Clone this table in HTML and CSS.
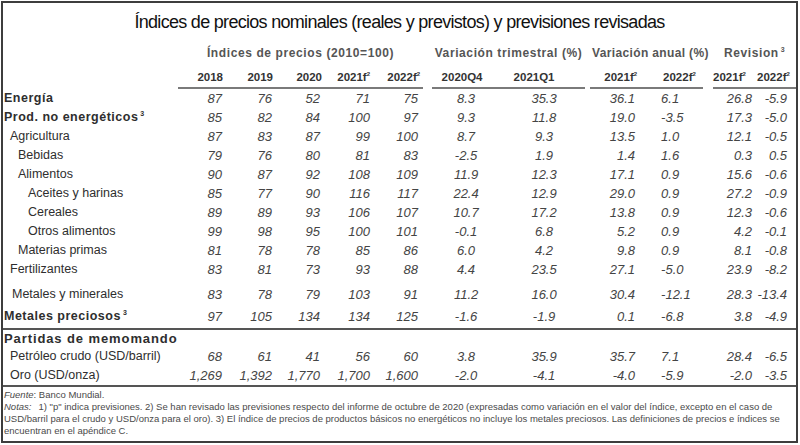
FILE: index.html
```html
<!DOCTYPE html>
<html lang="es">
<head>
<meta charset="utf-8">
<title>Índices de precios</title>
<link rel="stylesheet" href="styles.css">
</head>
<body>
<div class="sheet">
  <h1 class="title">Índices de precios nominales (reales y previstos) y previsiones revisadas</h1>
  <table class="grid">
    <colgroup>
      <col class="c-label"><col class="c-y18"><col class="c-y19"><col class="c-y20"><col class="c-y21"><col class="c-y22"><col class="c-gap1"><col class="c-q4"><col class="c-q1"><col class="c-gap2"><col class="c-a21"><col class="c-a22"><col class="c-gap3"><col class="c-r21"><col class="c-r22">
    </colgroup>
    <thead>
      <tr class="group-row">
        <th></th>
        <th colspan="5">Índices de precios (2010=100)</th>
        <th></th>
        <th colspan="2">Variación trimestral (%)</th>
        <th></th>
        <th colspan="2" class="g-anual">Variación anual (%)</th>
        <th></th>
        <th colspan="2">Revision<sup>3</sup></th>
      </tr>
      <tr class="year-row">
        <th class="nb"></th>
        <th class="u">2018</th>
        <th class="u">2019</th>
        <th class="u">2020</th>
        <th class="u">2021f<sup>2</sup></th>
        <th class="u">2022f<sup>2</sup></th>
        <th class="nb"></th>
        <th class="u">2020Q4</th>
        <th class="u">2021Q1</th>
        <th class="nb"></th>
        <th class="u">2021f<sup>2</sup></th>
        <th class="u">2022f<sup>2</sup></th>
        <th class="nb"></th>
        <th class="u">2021f<sup>2</sup></th>
        <th class="u">2022f<sup>2</sup></th>
      </tr>
    </thead>
    <tbody>
      <tr class="row"><td class="lbl b l0">Energía</td><td>87</td><td>76</td><td>52</td><td>71</td><td>75</td><td></td><td>8.3</td><td>35.3</td><td></td><td>36.1</td><td>6.1</td><td></td><td>26.8</td><td>-5.9</td></tr>
      <tr class="row"><td class="lbl b l0">Prod. no energéticos<sup>3</sup></td><td>85</td><td>82</td><td>84</td><td>100</td><td>97</td><td></td><td>9.3</td><td>11.8</td><td></td><td>19.0</td><td>-3.5</td><td></td><td>17.3</td><td>-5.0</td></tr>
      <tr class="row"><td class="lbl l1">Agricultura</td><td>87</td><td>83</td><td>87</td><td>99</td><td>100</td><td></td><td>8.7</td><td>9.3</td><td></td><td>13.5</td><td>1.0</td><td></td><td>12.1</td><td>-0.5</td></tr>
      <tr class="row"><td class="lbl l2">Bebidas</td><td>79</td><td>76</td><td>80</td><td>81</td><td>83</td><td></td><td>-2.5</td><td>1.9</td><td></td><td>1.4</td><td>1.6</td><td></td><td>0.3</td><td>0.5</td></tr>
      <tr class="row"><td class="lbl l2">Alimentos</td><td>90</td><td>87</td><td>92</td><td>108</td><td>109</td><td></td><td>11.9</td><td>12.3</td><td></td><td>17.1</td><td>0.9</td><td></td><td>15.6</td><td>-0.6</td></tr>
      <tr class="row"><td class="lbl l3">Aceites y harinas</td><td>85</td><td>77</td><td>90</td><td>116</td><td>117</td><td></td><td>22.4</td><td>12.9</td><td></td><td>29.0</td><td>0.9</td><td></td><td>27.2</td><td>-0.9</td></tr>
      <tr class="row"><td class="lbl l3">Cereales</td><td>89</td><td>89</td><td>93</td><td>106</td><td>107</td><td></td><td>10.7</td><td>17.2</td><td></td><td>13.8</td><td>0.9</td><td></td><td>12.3</td><td>-0.6</td></tr>
      <tr class="row"><td class="lbl l3">Otros alimentos</td><td>99</td><td>98</td><td>95</td><td>100</td><td>101</td><td></td><td>-0.1</td><td>6.8</td><td></td><td>5.2</td><td>0.9</td><td></td><td>4.2</td><td>-0.1</td></tr>
      <tr class="row"><td class="lbl l2">Materias primas</td><td>81</td><td>78</td><td>78</td><td>85</td><td>86</td><td></td><td>6.0</td><td>4.2</td><td></td><td>9.8</td><td>0.9</td><td></td><td>8.1</td><td>-0.8</td></tr>
      <tr class="row"><td class="lbl l1">Fertilizantes</td><td>83</td><td>81</td><td>73</td><td>93</td><td>88</td><td></td><td>4.4</td><td>23.5</td><td></td><td>27.1</td><td>-5.0</td><td></td><td>23.9</td><td>-8.2</td></tr>
      <tr class="row row-metals"><td class="lbl l1m">Metales y minerales</td><td>83</td><td>78</td><td>79</td><td>103</td><td>91</td><td></td><td>11.2</td><td>16.0</td><td></td><td>30.4</td><td>-12.1</td><td></td><td>28.3</td><td>-13.4</td></tr>
      <tr class="row row-prec"><td class="lbl b l0">Metales preciosos<sup>3</sup></td><td>97</td><td>105</td><td>134</td><td>134</td><td>125</td><td></td><td>-1.6</td><td>-1.9</td><td></td><td>0.1</td><td>-6.8</td><td></td><td>3.8</td><td>-4.9</td></tr>
      <tr class="row-memo"><td colspan="15" class="lbl b l0 memo">Partidas de memomando</td></tr>
      <tr class="row"><td class="lbl l1">Petróleo crudo (USD/barril)</td><td>68</td><td>61</td><td>41</td><td>56</td><td>60</td><td></td><td>3.8</td><td>35.9</td><td></td><td>35.7</td><td>7.1</td><td></td><td>28.4</td><td>-6.5</td></tr>
      <tr class="row"><td class="lbl l1">Oro (USD/onza)</td><td>1,269</td><td>1,392</td><td>1,770</td><td>1,700</td><td>1,600</td><td></td><td>-2.0</td><td>-4.1</td><td></td><td>-4.0</td><td>-5.9</td><td></td><td>-2.0</td><td>-3.5</td></tr>
    </tbody>
  </table>
  <div class="notes">
    <p class="note-line"><em>Fuente</em>: Banco Mundial.</p>
    <p class="note-line"><em class="notas">Notas:</em>1) "p" indica previsiones. 2) Se han revisado las previsiones respecto del informe de octubre de 2020 (expresadas como variación en el valor del índice, excepto en el caso de</p>
    <p class="note-line">USD/barril para el crudo y USD/onza para el oro). 3) El índice de precios de productos básicos no energéticos no incluye los metales preciosos. Las definiciones de precios e índices se</p>
    <p class="note-line">encuentran en el apéndice C.</p>
  </div>
</div>
</body>
</html>
```

FILE: styles.css
```css
* { box-sizing: border-box; }
html, body { margin: 0; padding: 0; background: #ffffff; }
body { font-family: "Liberation Sans", Arial, sans-serif; color: #333333; }

.sheet {
  margin: 1px;
  width: 797px;
  height: 442px;
  border: 2px solid #3d3d3d;
  display: flex;
  flex-direction: column;
  overflow: hidden;
}

.title {
  margin: 0;
  padding-top: 8px;
  height: 30px;
  flex: none;
  font-family: "Liberation Sans", Arial, sans-serif;
  font-weight: normal;
  font-size: 18px;
  line-height: 22px;
  letter-spacing: -0.7px;
  text-align: center;
  color: #111111;
  white-space: nowrap;
}

.grid {
  flex: none;
  width: 793px;
  table-layout: fixed;
  border-collapse: separate;
  border-spacing: 0;
}
.c-label { width: 175px; }
.c-y18 { width: 47px; }
.c-y19 { width: 50px; }
.c-y20 { width: 48px; }
.c-y21 { width: 50px; }
.c-y22 { width: 50px; }
.c-gap1 { width: 9px; }
.c-q4 { width: 68px; }
.c-q1 { width: 85px; }
.c-gap2 { width: 5px; }
.c-a21 { width: 55px; }
.c-a22 { width: 58px; }
.c-gap3 { width: 10px; }
.c-r21 { width: 44px; }
.c-r22 { width: 39px; }

.grid th, .grid td { padding: 0; white-space: nowrap; }

sup { font-size: 7px; line-height: 0; vertical-align: 5px; margin-left: 2px; }
.year-row sup { font-size: 6px; margin-left: 0; }

/* group header row */
.group-row th {
  height: 31px;
  vertical-align: bottom;
  padding-bottom: 4px;
  font-size: 12px;
  line-height: 14px;
  font-weight: bold;
  letter-spacing: 0.6px;
  color: #555555;
  text-align: center;
}
.group-row .g-anual { padding-left: 2px; letter-spacing: 0.35px; }

/* year header row */
.year-row th {
  height: 25px;
  vertical-align: bottom;
  padding-bottom: 3px;
  font-size: 11.5px;
  line-height: 14px;
  font-weight: bold;
  color: #333333;
  text-align: right;
}
.year-row th.u { border-bottom: 2px solid #7a7a7a; }
.year-row th:nth-child(2) { padding-right: 2px; }
.year-row th:nth-child(3) { padding-right: 2px; }
.year-row th:nth-child(4) { padding-right: 1px; }
.year-row th:nth-child(5) { padding-right: 3px; }
.year-row th:nth-child(6) { padding-right: 3px; }
.year-row th:nth-child(8) { text-align: center; padding-right: 8px; }
.year-row th:nth-child(9) { text-align: center; padding-right: 17px; }
.year-row th:nth-child(11) { padding-right: 8px; }
.year-row th:nth-child(12) { text-align: left; padding-left: 18px; }
.year-row th:nth-child(14) { padding-right: 13px; }
.year-row th:nth-child(15) { padding-right: 8px; }

/* data rows */
.row td {
  height: 19px;
  line-height: 19px;
  font-size: 13px;
  font-style: italic;
  color: #444444;
  text-align: right;
  vertical-align: middle;
}
.row td:nth-child(2),
.row td:nth-child(3),
.row td:nth-child(4),
.row td:nth-child(5) { padding-right: 3px; }
.row td:nth-child(6) { padding-right: 5px; }
.row td:nth-child(8) { text-align: center; }
.row td:nth-child(9) { text-align: center; padding-left: 3px; }
.row td:nth-child(11) { padding-right: 10px; }
.row td:nth-child(12) { text-align: left; padding-left: 16px; }
.row td:nth-child(14) { padding-right: 5px; }
.row td:nth-child(15) { padding-right: 9px; }

.row-metals td { height: 25px; vertical-align: bottom; }
.row-prec td { height: 24px; }

.grid td.lbl {
  text-align: left;
  font-style: normal;
  font-size: 12.5px;
  color: #2e2e2e;
}
.grid td.b { font-weight: bold; letter-spacing: 0.5px; font-size: 12.5px; }
.l0 { padding-left: 1px !important; }
.l1 { padding-left: 7px !important; }
.l1m { padding-left: 9px !important; }
.l2 { padding-left: 15px !important; }
.l3 { padding-left: 25px !important; }

.row-memo td.memo {
  height: 19px;
  border-top: 2px solid #555555;
  line-height: 17px;
  font-size: 13px;
  letter-spacing: 0.9px;
  vertical-align: middle;
}

/* notes */
.notes {
  flex: none;
  border-top: 2px solid #555555;
  padding: 2px 0 0 1px;
  font-size: 9.5px;
  color: #4a4a4a;
}
.note-line {
  margin: 0;
  height: 12px;
  line-height: 12px;
  white-space: nowrap;
}
.notas { margin-right: 7px; }
```
